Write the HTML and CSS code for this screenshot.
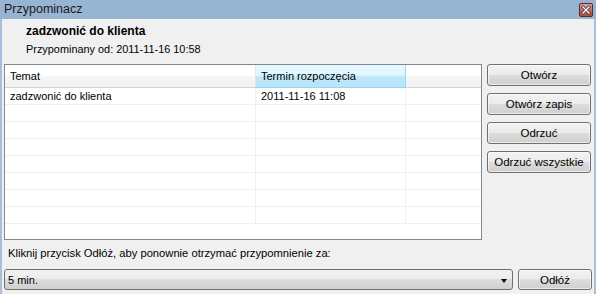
FILE: index.html
```html
<!DOCTYPE html>
<html>
<head>
<meta charset="utf-8">
<link rel="stylesheet" href="styles.css">
</head>
<body>
<div class="window">
  <div class="titlebar">
    <span class="title">Przypominacz</span>
    <span class="close">
      <svg width="14" height="14" viewBox="0 0 14 14">
        <defs>
          <linearGradient id="cg" x1="0" y1="0" x2="0" y2="1">
            <stop offset="0" stop-color="#e6a8a0"/>
            <stop offset="0.5" stop-color="#c86a5e"/>
            <stop offset="1" stop-color="#b84a3c"/>
          </linearGradient>
        </defs>
        <rect x="0.5" y="0.5" width="13" height="13" rx="1.5" fill="url(#cg)" stroke="#5a2a2a"/>
        <path d="M4 4 L10 10 M10 4 L4 10" stroke="#3a3a3a" stroke-width="3" stroke-linecap="square"/>
        <path d="M4 4 L10 10 M10 4 L4 10" stroke="#ffffff" stroke-width="1.4" stroke-linecap="square"/>
      </svg>
    </span>
  </div>
  <div class="content">
    <div class="info">
      <div class="subject">zadzwonić do klienta</div>
      <div class="since">Przypominany od: 2011-11-16 10:58</div>
    </div>
    <div class="main">
      <div class="list">
        <table class="grid">
          <thead>
            <tr>
              <th class="c1">Temat</th>
              <th class="c2 sel">Termin rozpoczęcia</th>
              <th class="c3"></th>
            </tr>
          </thead>
          <tbody>
            <tr><td>zadzwonić do klienta</td><td>2011-11-16 11:08</td><td></td></tr>
            <tr><td></td><td></td><td></td></tr>
            <tr><td></td><td></td><td></td></tr>
            <tr><td></td><td></td><td></td></tr>
            <tr><td></td><td></td><td></td></tr>
            <tr><td></td><td></td><td></td></tr>
            <tr><td></td><td></td><td></td></tr>
            <tr><td></td><td></td><td></td></tr>
          </tbody>
        </table>
      </div>
      <div class="actions">
        <button class="btn">Otwórz</button>
        <button class="btn">Otwórz zapis</button>
        <button class="btn">Odrzuć</button>
        <button class="btn">Odrzuć wszystkie</button>
      </div>
    </div>
    <div class="hint">Kliknij przycisk Odłóż, aby ponownie otrzymać przypomnienie za:</div>
    <div class="snooze">
      <div class="combo">
        <span>5 min.</span>
        <span class="arrow"></span>
      </div>
      <button class="btn snooze-btn">Odłóż</button>
    </div>
  </div>
</div>
</body>
</html>
```

FILE: styles.css
```css
html, body {
  margin: 0;
  padding: 0;
  width: 596px;
  height: 294px;
  overflow: hidden;
  background: #f0f0f0;
}
body {
  font-family: "Liberation Sans", Arial, sans-serif;
  font-size: 11px;
  color: #000;
}
.window {
  box-sizing: border-box;
  width: 596px;
  height: 294px;
  border-left: 2px solid #a6bfdc;
  border-right: 2px solid #a6bfdc;
  background: #f0f0f0;
  display: flex;
  flex-direction: column;
}
.titlebar {
  height: 19px;
  background: #98b4d3;
  display: flex;
  align-items: center;
  justify-content: space-between;
  margin: 0 -2px;
  padding: 0 3px 0 4px;
}
.title {
  color: #1a1a1a;
  font-size: 12.5px;
  line-height: 19px;
}
.close {
  display: flex;
  width: 14px;
  height: 14px;
}
.content {
  display: flex;
  flex-direction: column;
  padding: 0 2px 0 2px;
}
.info {
  padding: 5px 0 0 22px;
  height: 40px;
  box-sizing: border-box;
}
.subject {
  font-weight: bold;
  font-size: 12px;
  line-height: 14px;
}
.since {
  margin-top: 4px;
  font-size: 10.9px;
  line-height: 14px;
}
.main {
  display: flex;
  gap: 5px;
  margin-top: 5px;
}
.list {
  width: 478px;
  height: 176px;
  box-sizing: border-box;
  border: 1px solid #828790;
  background: #fff;
  overflow: hidden;
}
.grid {
  border-collapse: collapse;
  width: 100%;
  table-layout: fixed;
}
.grid th {
  height: 22px;
  padding: 0 0 0 5px;
  text-align: left;
  font-weight: normal;
  background: linear-gradient(#ffffff 0%, #ffffff 45%, #f4f5f7 55%, #f1f2f4 100%);
  border-bottom: 1px solid #d5d5d5;
  border-right: 1px solid #e3e4e6;
  white-space: nowrap;
}
.grid th.c1 { width: 245px; }
.grid th.c2 { width: 144px; }
.grid th.sel {
  background: linear-gradient(#e3f7fe 0%, #e3f7fe 45%, #bde7f8 55%, #b7e4f8 100%);
  border-left: 1px solid #96d9f9;
  border-right: 1px solid #96d9f9;
  border-bottom: 1px solid #96d9f9;
}
.grid td {
  height: 16px;
  padding: 0 0 0 5px;
  border-bottom: 1px solid #f0f0f0;
  border-right: 1px solid #f0f0f0;
  white-space: nowrap;
  line-height: 16px;
}
.grid td:last-child, .grid th:last-child { border-right: none; }
.actions {
  display: flex;
  flex-direction: column;
  gap: 7px;
  width: 104px;
}
.btn {
  font-family: "Liberation Sans", Arial, sans-serif;
  font-size: 11.5px;
  color: #000;
  height: 22px;
  box-sizing: border-box;
  border: 1px solid #707070;
  border-radius: 3px;
  background: linear-gradient(#f2f2f2 0%, #ebebeb 50%, #dddddd 50%, #cfcfcf 100%);
  box-shadow: inset 0 0 0 1px rgba(255,255,255,0.6);
  padding: 0;
}
.hint {
  margin: 6px 0 0 4px;
  font-size: 11.2px;
  line-height: 14px;
}
.snooze {
  display: flex;
  gap: 5px;
  margin-top: 9px;
}
.combo {
  width: 509px;
  height: 21px;
  box-sizing: border-box;
  border: 1px solid #707070;
  border-radius: 3px;
  background: linear-gradient(#f2f2f2 0%, #ebebeb 50%, #dddddd 50%, #cfcfcf 100%);
  display: flex;
  align-items: center;
  justify-content: space-between;
  padding: 0 5px 0 3px;
}
.arrow {
  width: 0;
  height: 0;
  border-left: 3.5px solid transparent;
  border-right: 3.5px solid transparent;
  border-top: 4px solid #000;
  margin-top: 2px;
}
.snooze-btn {
  width: 74px;
  height: 21px;
}
```
